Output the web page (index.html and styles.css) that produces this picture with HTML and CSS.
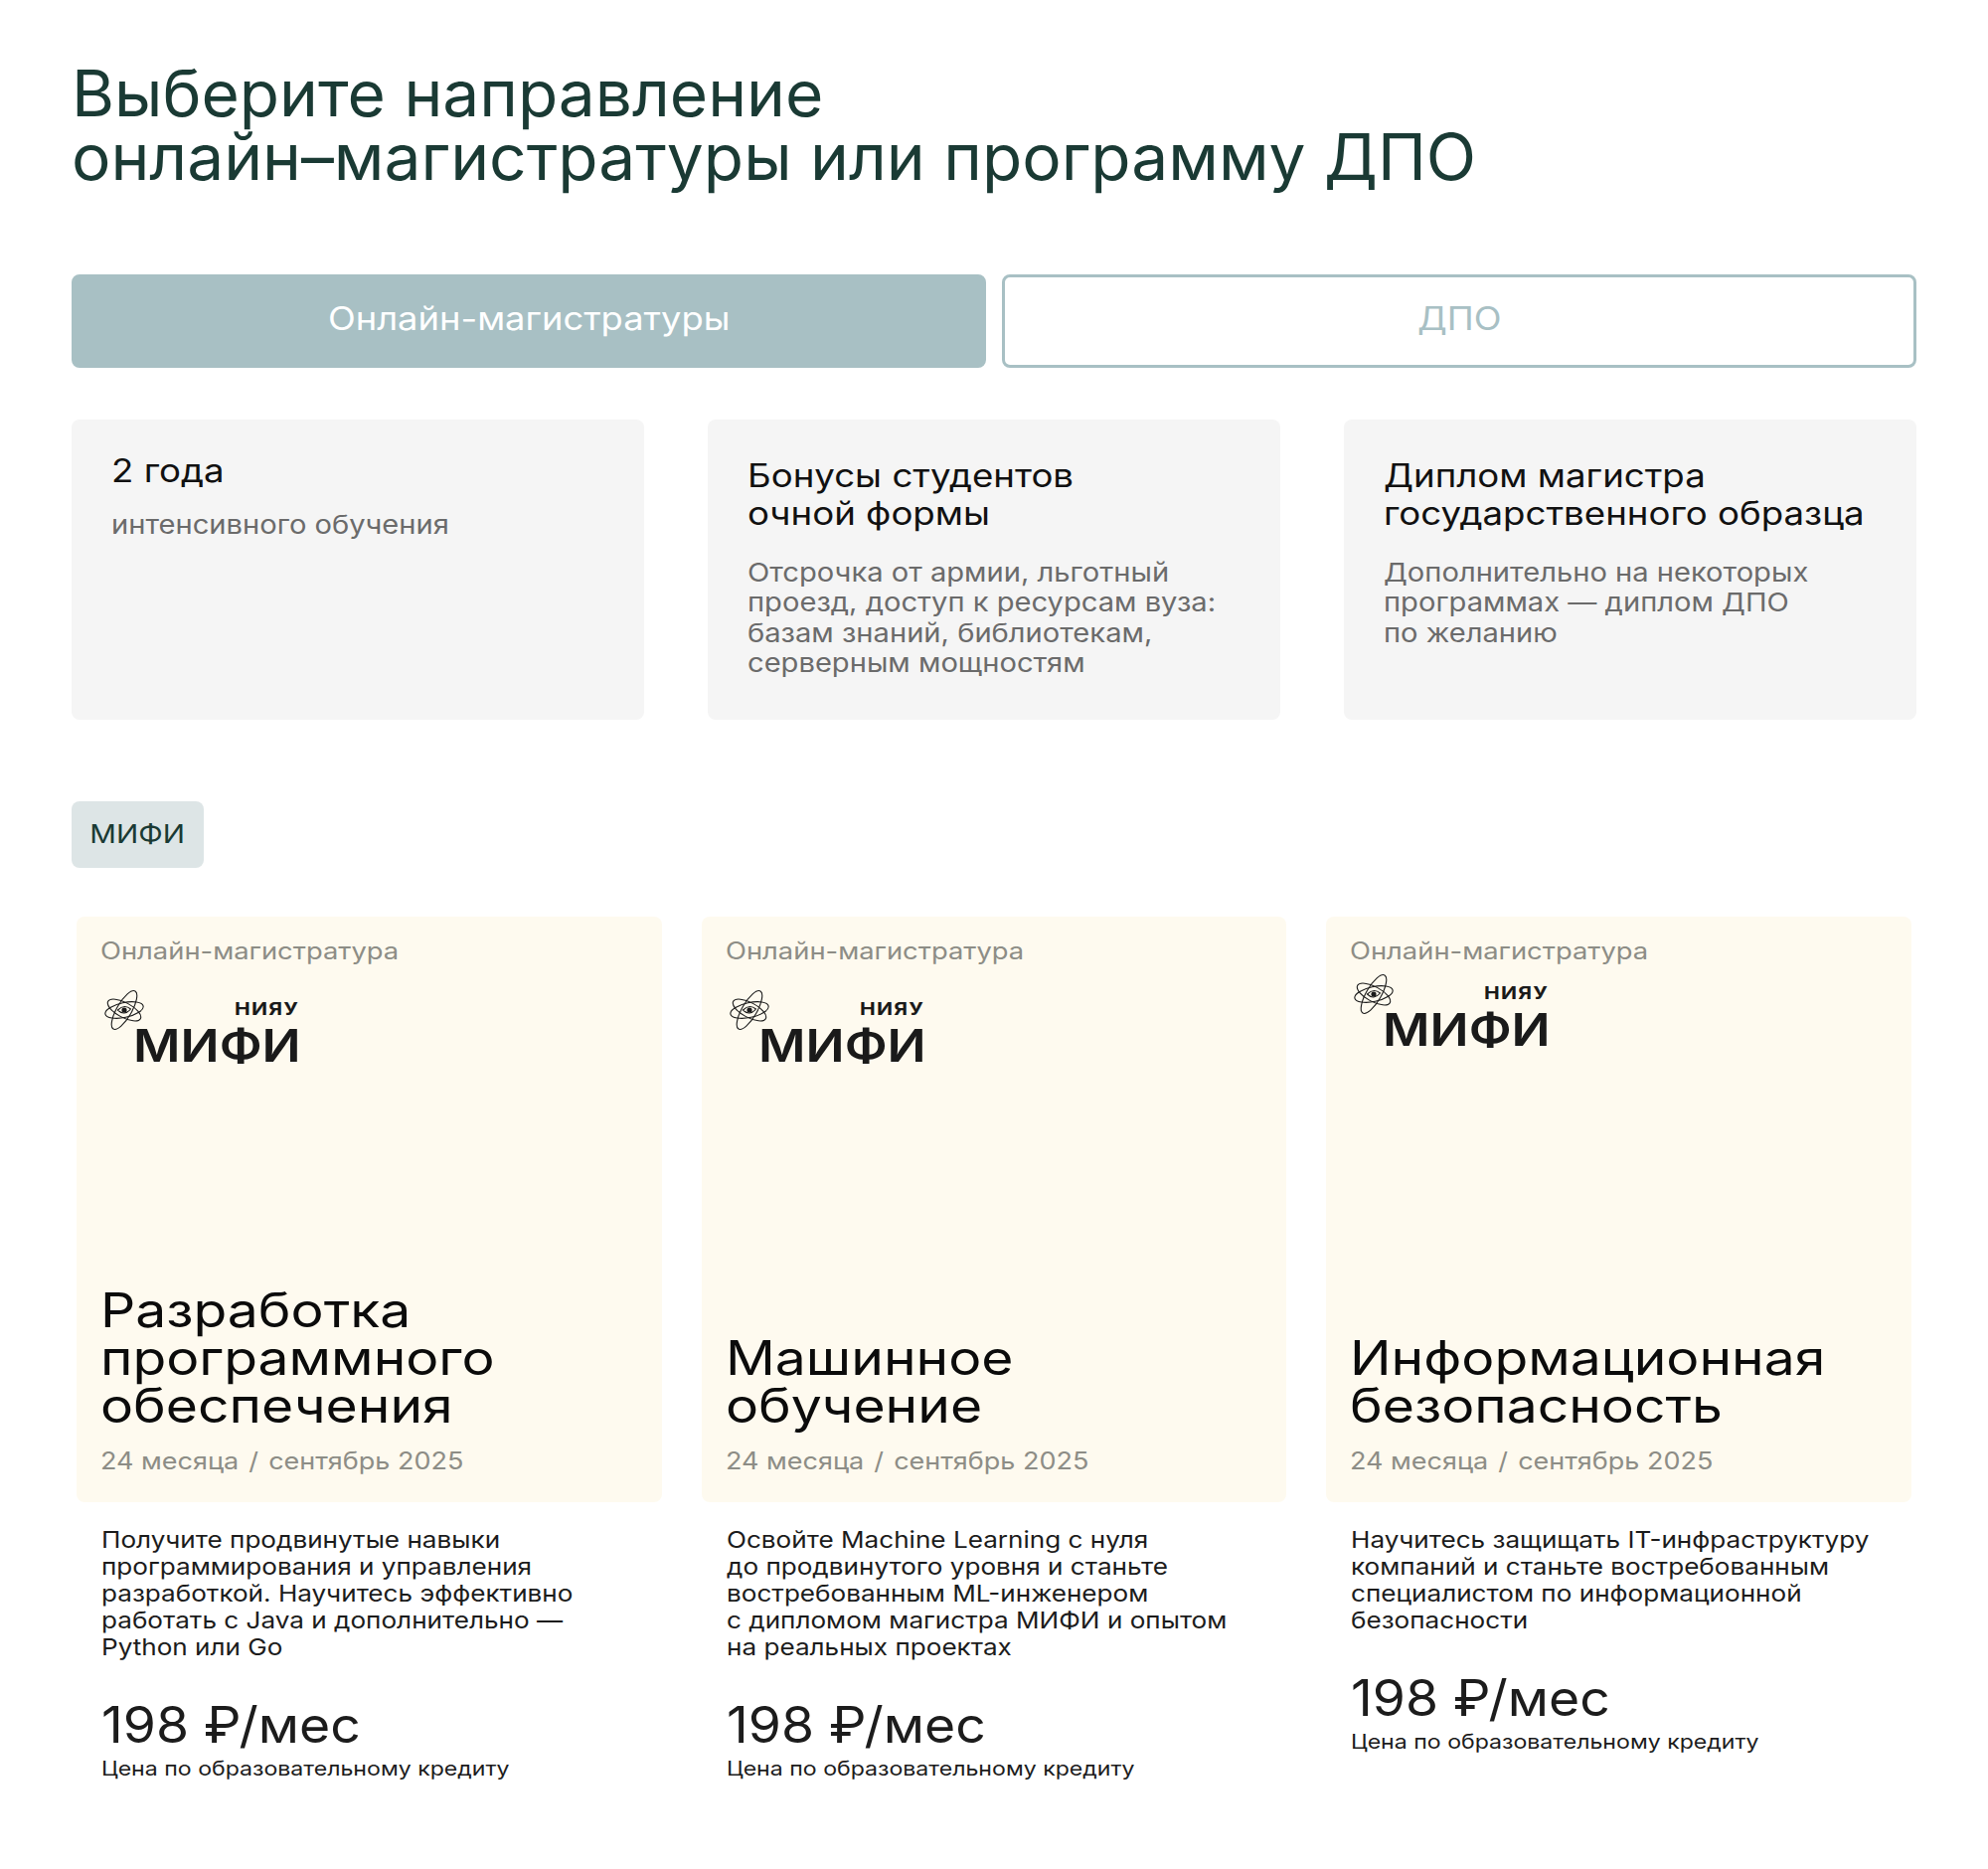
FILE: index.html
```html
<!DOCTYPE html>
<html lang="ru">
<head><meta charset="utf-8"><title>Направления</title><link rel="stylesheet" href="styles.css"></head>
<body>
<main class="page">
<h1 class="heading">Выберите направление<br>онлайн–магистратуры или программу ДПО</h1>
<div class="tabs"><button class="tab tab-active"><span class="tab-label">Онлайн-магистратуры</span></button><button class="tab"><span class="tab-label">ДПО</span></button></div>
<section class="features">
<div class="feature"><h3 class="feature-title feature-title-short">2 года</h3><p class="feature-text">интенсивного обучения</p></div>
<div class="feature"><h3 class="feature-title">Бонусы студентов<br>очной формы</h3><p class="feature-text">Отсрочка от армии, льготный<br>проезд, доступ к ресурсам вуза:<br>базам знаний, библиотекам,<br>серверным мощностям</p></div>
<div class="feature"><h3 class="feature-title">Диплом магистра<br>государственного образца</h3><p class="feature-text">Дополнительно на некоторых<br>программах — диплом ДПО<br>по желанию</p></div>
</section>
<div class="chip"><span class="chip-label">МИФИ</span></div>
<section class="programs">
<article class="program">
<div class="program-card"><div class="kind">Онлайн-магистратура</div>
<div class="logo"><svg class="atom" viewBox="0 0 40 42"><g fill="none" stroke="#1a1a1a" stroke-width="1.1"><ellipse cx="20" cy="21" rx="22" ry="7.5" transform="rotate(-60 20 21)"/><ellipse cx="20" cy="21" rx="19.5" ry="7.5" transform="rotate(-12 20 21)"/><ellipse cx="20" cy="21" rx="18.5" ry="7.5" transform="rotate(28 20 21)"/><path d="M13.5 21Q20 14.5 26.5 20Q20 27.5 13.5 21Z"/></g><circle cx="20" cy="21" r="2.6" fill="#1a1a1a"/></svg><div class="logo-sub">НИЯУ</div><div class="logo-main">МИФИ</div></div>
<div class="program-bottom"><h2 class="program-title">Разработка<br>программного<br>обеспечения</h2><div class="kind kind-date">24 месяца <span class="date-sep">/</span> сентябрь 2025</div></div></div>
<div class="program-body"><p class="program-text">Получите продвинутые навыки<br>программирования и управления<br>разработкой. Научитесь эффективно<br>работать с Java и дополнительно —<br>Python или Go</p><div class="price">198 ₽/мес</div><div class="price-note">Цена по образовательному кредиту</div></div>
</article>
<article class="program">
<div class="program-card"><div class="kind">Онлайн-магистратура</div>
<div class="logo"><svg class="atom" viewBox="0 0 40 42"><g fill="none" stroke="#1a1a1a" stroke-width="1.1"><ellipse cx="20" cy="21" rx="22" ry="7.5" transform="rotate(-60 20 21)"/><ellipse cx="20" cy="21" rx="19.5" ry="7.5" transform="rotate(-12 20 21)"/><ellipse cx="20" cy="21" rx="18.5" ry="7.5" transform="rotate(28 20 21)"/><path d="M13.5 21Q20 14.5 26.5 20Q20 27.5 13.5 21Z"/></g><circle cx="20" cy="21" r="2.6" fill="#1a1a1a"/></svg><div class="logo-sub">НИЯУ</div><div class="logo-main">МИФИ</div></div>
<div class="program-bottom"><h2 class="program-title">Машинное<br>обучение</h2><div class="kind kind-date">24 месяца <span class="date-sep">/</span> сентябрь 2025</div></div></div>
<div class="program-body"><p class="program-text">Освойте Machine Learning с нуля<br>до продвинутого уровня и станьте<br>востребованным ML-инженером<br>с дипломом магистра МИФИ и опытом<br>на реальных проектах</p><div class="price">198 ₽/мес</div><div class="price-note">Цена по образовательному кредиту</div></div>
</article>
<article class="program">
<div class="program-card"><div class="kind">Онлайн-магистратура</div>
<div class="logo logo-raised"><svg class="atom" viewBox="0 0 40 42"><g fill="none" stroke="#1a1a1a" stroke-width="1.1"><ellipse cx="20" cy="21" rx="22" ry="7.5" transform="rotate(-60 20 21)"/><ellipse cx="20" cy="21" rx="19.5" ry="7.5" transform="rotate(-12 20 21)"/><ellipse cx="20" cy="21" rx="18.5" ry="7.5" transform="rotate(28 20 21)"/><path d="M13.5 21Q20 14.5 26.5 20Q20 27.5 13.5 21Z"/></g><circle cx="20" cy="21" r="2.6" fill="#1a1a1a"/></svg><div class="logo-sub">НИЯУ</div><div class="logo-main">МИФИ</div></div>
<div class="program-bottom"><h2 class="program-title">Информационная<br>безопасность</h2><div class="kind kind-date">24 месяца <span class="date-sep">/</span> сентябрь 2025</div></div></div>
<div class="program-body"><p class="program-text">Научитесь защищать IT-инфраструктуру<br>компаний и станьте востребованным<br>специалистом по информационной<br>безопасности</p><div class="price">198 ₽/мес</div><div class="price-note">Цена по образовательному кредиту</div></div>
</article>
</section>
</main>
</body>
</html>
```
FILE: styles.css
```css
*{box-sizing:border-box}
html,body{margin:0;background:#fff}
body{font-family:"Inter","Liberation Sans",sans-serif;color:#111;height:1880px;overflow:hidden}
.page{padding:62px 72px 0}
.heading,.feature-title,.feature-text,.kind,.program-title,.program-text,.price,.price-note{transform-origin:left center}
.heading{margin:0;font-weight:400;font-size:64px;line-height:64px;color:#1a3a34;transform:scaleX(1.028)}
.tabs{display:grid;grid-template-columns:1fr 1fr;gap:16px;margin-top:86px}
.tab{height:94px;padding:0 0 5px;border-radius:8px;border:3px solid #a8c0c4;background:#fff;color:#a8c0c4;font:400 32px/1 "Inter",sans-serif}
.tab-label{display:inline-block;transform:scaleX(1.135)}
.tab-active{background:#a8c0c4;color:#fff}
.features{display:grid;grid-template-columns:repeat(3,1fr);gap:64px;margin-top:52px}
.feature{height:302px;background:#f5f5f5;border-radius:8px;padding:37.5px 40px}
.feature-title{margin:0;font-weight:400;font-size:32px;line-height:38px;color:#111;transform:scaleX(1.145)}
.feature-title-short{margin-top:-5px}
.feature-text{margin:25px 0 0;font-size:26px;line-height:30.6px;color:#6b6b6b;transform:scaleX(1.12)}
.feature-title-short + .feature-text{margin-top:20px}
.chip{display:flex;align-items:center;justify-content:center;width:133px;height:67px;padding-bottom:3px;margin-top:82px;background:#dde5e6;border-radius:8px;font-size:26px;color:#1a3a34}
.chip-label{display:inline-block;transform:scaleX(1.136)}
.programs{display:grid;grid-template-columns:repeat(3,1fr);gap:40px;margin:49px 5px 0}
.program-card{position:relative;display:flex;flex-direction:column;height:589px;padding:20px 24px 26px;background:#fefaef;border-radius:8px}
.kind{font-size:24px;line-height:30px;color:#8d8d86;transform:scaleX(1.14)}
.kind-date{transform:scaleX(1.125)}
.date-sep{margin:0 2.2px}
.logo{position:relative;width:205px;height:84px;margin-top:23px;color:#1a1a1a}
.logo-raised{margin-top:7px}
.atom{position:absolute;left:4px;top:0;width:40px;height:42px}
.logo-sub{position:absolute;left:135px;top:8px;font:700 18px/24px "Inter",sans-serif;letter-spacing:1px;transform:scaleX(1.17);transform-origin:left center}
.logo-main{position:absolute;left:33px;top:31px;font:600 45px/52px "Inter",sans-serif;transform:scaleX(1.145);transform-origin:left center}
.program-bottom{margin-top:auto}
.program-title{margin:0 0 17px;font-weight:400;font-size:48px;line-height:48px;color:#0b0b0b;transform:scaleX(1.15)}
.program-body{padding:25px 25px 0}
.program-text{margin:0;font-size:23px;line-height:26.9px;color:#1c1c1c;transform:scaleX(1.135)}
.price{margin-top:36px;font-size:50px;line-height:56px;color:#1c1c1c;transform:scaleX(1.07)}
.price-note{margin-top:2px;font-size:20px;line-height:28px;color:#1c1c1c;transform:scaleX(1.155)}
```
